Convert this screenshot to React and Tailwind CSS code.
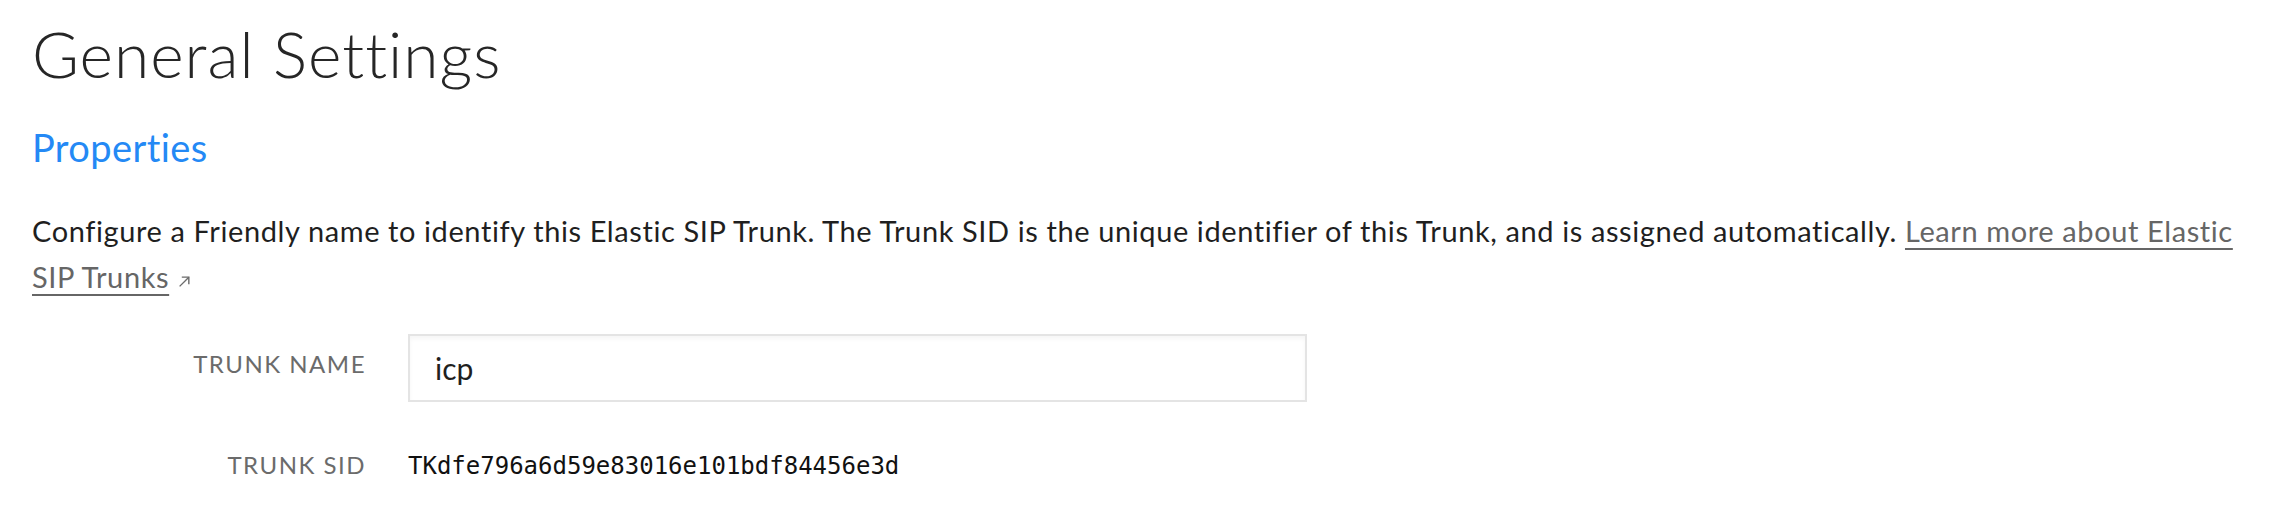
import React from 'react';

const SANS = 'font-["Lato","Open_Sans",sans-serif] [font-variant-ligatures:none]';

const ExternalArrow = () => (
  <svg width="13" height="13" viewBox="0 0 12 12" className="inline-block align-baseline ml-[9px]" fill="none" stroke="#6b6b6b" strokeWidth="1.3">
    <path d="M1.5 10.5 L10 2" />
    <path d="M3.5 2 H10 V8.5" />
  </svg>
);

const App = () => {
  return (
    <div className={`${SANS} bg-white min-h-[520px] pl-[32px] pr-[14px] text-[#222]`}>
      <h1 className="pt-[15px] text-[64px] leading-[77px] font-light tracking-[1px] text-[#262626]">General Settings</h1>

      <h2 className="mt-[32px] text-[38px] leading-[46px] tracking-[0.4px] text-[#2489f5]">Properties</h2>

      <p className="mt-[38px] text-[29px] leading-[46px] tracking-[0.6px] text-[#1f1f1f]">
        Configure a Friendly name to identify this Elastic SIP Trunk. The Trunk SID is the unique identifier of this Trunk, and is assigned automatically.{' '}
        <a href="#" className="text-[#666] underline decoration-[2px] underline-offset-[6px]">Learn more about Elastic SIP Trunks</a>
        <ExternalArrow />
      </p>

      <div className="mt-[34px] flex items-start">
        <label className="w-[334px] shrink-0 pt-[16px] text-right text-[24px] leading-[28px] tracking-[1.5px] text-[#6b6b6b]">TRUNK NAME</label>
        <div className="ml-[42px] w-[899px] h-[68px] border-2 border-[#e4e4e4] bg-white shadow-[inset_0_3px_4px_rgba(0,0,0,0.04)] flex items-center px-[25px]">
          <span className="text-[30px] text-[#1f1f1f]">icp</span>
        </div>
      </div>

      <div className="mt-[46px] flex items-baseline">
        <label className="w-[334px] shrink-0 text-right text-[24px] leading-[28px] tracking-[1.5px] text-[#6b6b6b]">TRUNK SID</label>
        <span className="ml-[42px] font-['DejaVu_Sans_Mono',monospace] text-[24px] text-[#111]">TKdfe796a6d59e83016e101bdf84456e3d</span>
      </div>
    </div>
  );
};

export default App;
